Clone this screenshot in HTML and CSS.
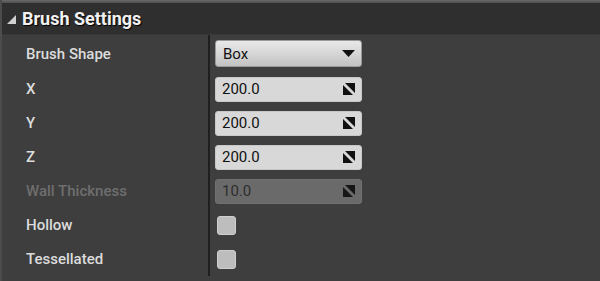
FILE: index.html
```html
<!DOCTYPE html>
<html>
<head>
<meta charset="utf-8">
<link rel="stylesheet" href="styles.css">
</head>
<body>
<div class="panel">
  <div class="topline"></div>
  <div class="header">
    <svg class="caret" width="9" height="9" viewBox="0 0 9 9"><polygon points="9,0 9,9 0,9" fill="#d0d0d0"/></svg>
    <span class="title">Brush Settings</span>
  </div>
  <div class="body">
    <div class="row first">
      <div class="label">Brush Shape</div>
      <div class="value">
        <div class="combo"><span>Box</span>
          <svg width="13" height="7" viewBox="0 0 13 7"><polygon points="0,0 13,0 6.5,7" fill="#111"/></svg>
        </div>
      </div>
    </div>
    <div class="row">
      <div class="label">X</div>
      <div class="value"><div class="num"><span>200.0</span><svg class="spin" width="12" height="12" viewBox="0 0 12 12"><polygon points="2,0 12,0 12,10" fill="#111"/><polygon points="0,2 0,12 10,12" fill="#111"/></svg></div></div>
    </div>
    <div class="row">
      <div class="label">Y</div>
      <div class="value"><div class="num"><span>200.0</span><svg class="spin" width="12" height="12" viewBox="0 0 12 12"><polygon points="2,0 12,0 12,10" fill="#111"/><polygon points="0,2 0,12 10,12" fill="#111"/></svg></div></div>
    </div>
    <div class="row">
      <div class="label">Z</div>
      <div class="value"><div class="num"><span>200.0</span><svg class="spin" width="12" height="12" viewBox="0 0 12 12"><polygon points="2,0 12,0 12,10" fill="#111"/><polygon points="0,2 0,12 10,12" fill="#111"/></svg></div></div>
    </div>
    <div class="row">
      <div class="label disabled">Wall Thickness</div>
      <div class="value"><div class="num off"><span>10.0</span><svg class="spin" width="12" height="12" viewBox="0 0 12 12"><polygon points="2,0 12,0 12,10" fill="#161616"/><polygon points="0,2 0,12 10,12" fill="#161616"/></svg></div></div>
    </div>
    <div class="row">
      <div class="label">Hollow</div>
      <div class="value"><div class="check"></div></div>
    </div>
    <div class="row">
      <div class="label">Tessellated</div>
      <div class="value"><div class="check"></div></div>
    </div>
  </div>
</div>
</body>
</html>
```
FILE: styles.css
```css
html, body {
  margin: 0;
  padding: 0;
  background: #3e3e3e;
  width: 600px;
  height: 281px;
  overflow: hidden;
}
.panel {
  width: 600px;
  height: 281px;
  font-family: Roboto, "Liberation Sans", sans-serif;
  background: #3e3e3e;
  border-left: 2px solid #4c4c4c;
  box-sizing: border-box;
}
.topline {
  height: 3px;
  background: linear-gradient(#6a6a6a, #4e4e4e);
}
.header {
  height: 32px;
  background: #2f2f2f;
  display: flex;
  align-items: center;
  padding-left: 5px;
  border-bottom: 1px solid #383838;
  box-sizing: border-box;
}
.caret {
  margin-right: 6px;
  margin-top: 1px;
}
.title {
  color: #f2f2f2;
  font-weight: bold;
  font-size: 18px;
  text-shadow: 1px 1px 1px #000;
}
.body {
  display: flex;
  flex-direction: column;
}
.row {
  display: flex;
  height: 34px;
  align-items: stretch;
}
.row.first {
  height: 37px;
}
.label {
  width: 182px;
  padding-left: 24px;
  display: flex;
  align-items: center;
  font-size: 15px;
  font-weight: 500;
  color: #dcdcdc;
  border-right: 2px solid #1f1f1f;
}
.label.disabled {
  color: #6e6e6e;
}
.value {
  flex: 1;
  display: flex;
  align-items: center;
  padding-left: 5px;
}
.combo {
  width: 147px;
  height: 27px;
  box-sizing: border-box;
  border-radius: 3px;
  background: linear-gradient(#e8e8e8, #d6d6d6 50%, #c2c2c2);
  border: 1px solid #9a9a9a;
  display: flex;
  align-items: center;
  justify-content: space-between;
  padding: 0 6px 0 7px;
  font-size: 15px;
  color: #111;
}
.num {
  width: 147px;
  height: 25px;
  box-sizing: border-box;
  border-radius: 3px;
  background: #d8d8d8;
  border: 1px solid #c8c8c8;
  display: flex;
  align-items: center;
  justify-content: space-between;
  padding: 0 6px 0 6px;
  font-size: 15px;
  color: #111;
}
.num.off {
  background: #6a6a6a;
  border-color: #707070;
  color: #2e2e2e;
}
.check {
  margin-left: 2px;
  width: 19px;
  height: 19px;
  box-sizing: border-box;
  border-radius: 3px;
  background: #bdbdbd;
  border: 1px solid #cfcfcf;
}
```
